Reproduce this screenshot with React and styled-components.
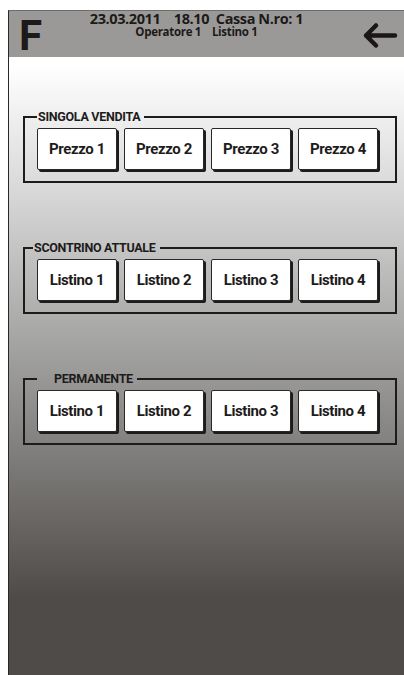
import React from 'react';
import styled, { createGlobalStyle } from 'styled-components';

const GlobalStyle = createGlobalStyle`
  html, body {
    margin: 0;
    padding: 0;
    background: #fff;
  }
  body {
    font-family: Roboto, "Liberation Sans", sans-serif;
  }
`;

const groups = [
  { title: 'SINGOLA VENDITA', offset: 0, pad: 1, items: ['Prezzo 1', 'Prezzo 2', 'Prezzo 3', 'Prezzo 4'] },
  { title: 'SCONTRINO ATTUALE', offset: -4, pad: 1, items: ['Listino 1', 'Listino 2', 'Listino 3', 'Listino 4'] },
  { title: 'PERMANENTE', offset: 0, pad: 17, items: ['Listino 1', 'Listino 2', 'Listino 3', 'Listino 4'] },
];

const BackArrow = () => (
  <svg width="36" height="27" viewBox="0 0 36 27">
    <path
      d="M33 13.5 H4 M14 3.5 L4 13.5 L14 23.5"
      fill="none"
      stroke="#1a1716"
      strokeWidth="4.5"
      strokeLinecap="round"
      strokeLinejoin="round"
    />
  </svg>
);

const App = () => {
  return (
    <>
      <GlobalStyle />
      <Frame>
        <Header>
          <Logo>F</Logo>
          <Info>
            <InfoMain>23.03.2011&nbsp;&nbsp;&nbsp; 18.10&nbsp; Cassa N.ro: 1</InfoMain>
            <InfoSub>Operatore 1&nbsp;&nbsp;&nbsp; Listino 1</InfoSub>
          </Info>
          <BackButton>
            <BackArrow />
          </BackButton>
        </Header>
        <Body>
          {groups.map((g) => (
            <Group key={g.title}>
              <Legend offset={g.offset} pad={g.pad}>{g.title}</Legend>
              <ButtonRow>
                {g.items.map((item) => (
                  <KeyButton key={item}>{item}</KeyButton>
                ))}
              </ButtonRow>
            </Group>
          ))}
        </Body>
      </Frame>
    </>
  );
};

export default App;

const Frame = styled.div`
  margin: 10px 0 0 8px;
  height: 665px;
  border-left: 1px solid #2a2826;
  border-top: 1px solid #6e6c6a;
  display: flex;
  flex-direction: column;
  overflow: hidden;
`;

const Header = styled.div`
  height: 46px;
  flex-shrink: 0;
  background: #9b9997;
  display: flex;
  align-items: flex-start;
`;

const Logo = styled.div`
  font-family: Roboto, "Liberation Sans", sans-serif;
  font-weight: 700;
  font-size: 42px;
  line-height: 42px;
  color: #1c1a19;
  margin: 4px 0 0 10px;
  width: 30px;
`;

const Info = styled.div`
  flex: 1;
  display: flex;
  flex-direction: column;
  align-items: center;
  padding-right: 14px;
  color: #1c1a19;
  font-family: "Open Sans", "Liberation Sans", sans-serif;
  font-weight: 700;
`;

const InfoMain = styled.div`
  font-size: 14.5px;
  line-height: 15px;
  letter-spacing: -0.4px;
`;

const InfoSub = styled.div`
  font-size: 11.5px;
  line-height: 12px;
  letter-spacing: -0.3px;
`;

const BackButton = styled.div`
  width: 40px;
  margin: 11px 6px 0 0;
  display: flex;
  justify-content: flex-end;
`;

const Body = styled.div`
  flex: 1;
  background: linear-gradient(
    to bottom,
    #ffffff 0px,
    #ffffff 8px,
    #d6d6d6 140px,
    #a6a6a5 280px,
    #7b7977 410px,
    #4f4b48 540px,
    #4f4b48 100%
  );
  display: flex;
  flex-direction: column;
  padding-top: 53px;
  gap: 58px;
`;

const Group = styled.fieldset`
  margin: 0 7px 0 14px;
  padding: 4px 0 11px 12px;
  border: 2px solid #1e1c1b;
  min-width: 0;
`;

const Legend = styled.legend`
  margin-left: ${(p) => p.offset}px;
  padding: 0 4px 0 ${(p) => p.pad}px;
  font-size: 12.5px;
  line-height: 14px;
  font-weight: 700;
  letter-spacing: -0.3px;
  color: #1e1c1b;
`;

const ButtonRow = styled.div`
  display: flex;
  gap: 7px;
`;

const KeyButton = styled.div`
  width: 80px;
  height: 42px;
  box-sizing: border-box;
  background: #fff;
  border: 1px solid #2a2826;
  border-radius: 2px;
  box-shadow: 2px 2px 0 #1e1c1b;
  display: flex;
  align-items: center;
  justify-content: center;
  font-size: 15px;
  font-weight: 700;
  letter-spacing: -0.4px;
  color: #1e1c1b;
`;
